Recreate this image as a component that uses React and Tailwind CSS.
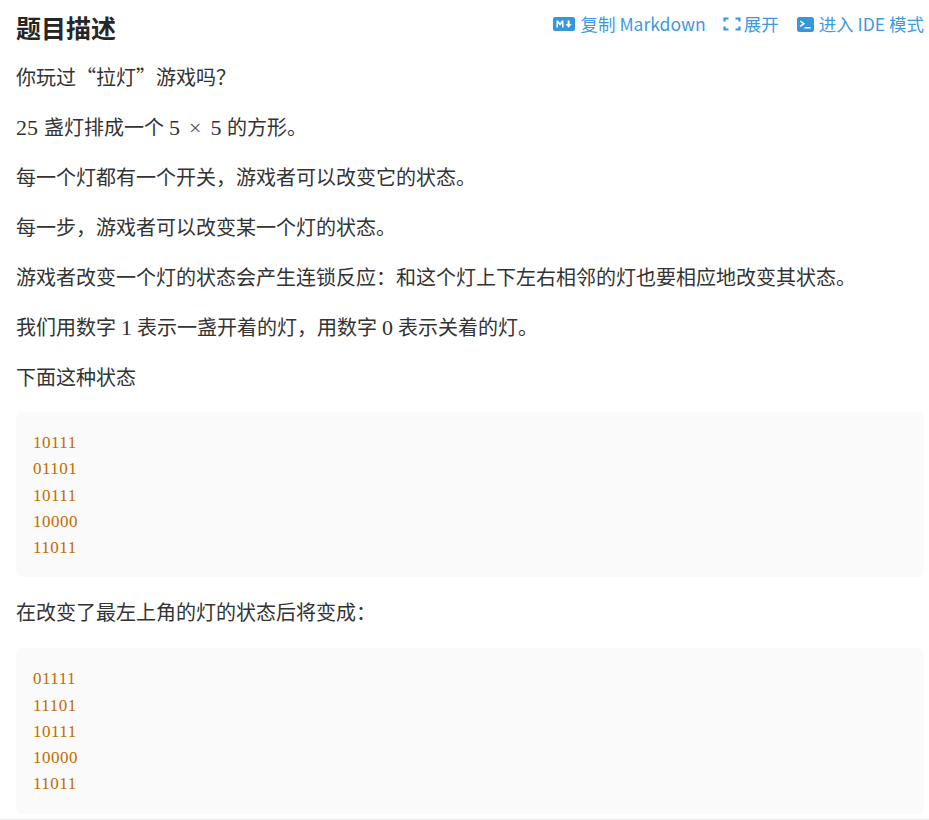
const cjk = "font-['Noto_Sans_CJK_SC','Noto_Sans',sans-serif]";
const serif = "font-['Liberation_Serif',serif] text-[22px]";

function Num({ children }) {
  return <span className={`${serif} mx-[5px]`}>{children}</span>;
}

function Para({ children }) {
  return <p className="h-[30px] mb-5 leading-[28px] whitespace-nowrap">{children}</p>;
}

function CodeBlock({ lines }) {
  return (
    <pre className="bg-[#fafafa] rounded-md px-[17px] pt-[18px] pb-[16px] mb-[21px] font-['Liberation_Serif',serif] text-[17px] tracking-[0.5px] leading-[26.25px] text-[#c26c00]">
      {lines.map((line, i) => (
        <div key={i}>{line}</div>
      ))}
    </pre>
  );
}

export default function App() {
  return (
    <div className={`${cjk} w-[929px] h-[820px] overflow-hidden bg-white pl-4 pr-[5px] text-[#333] text-[20px] border-b-2 border-[#f5f5f5]`}>
      <div className="flex items-center justify-between h-[50px] mb-[13px] pt-[6px]">
        <h1 className="text-[25px] font-bold text-[#262626]">题目描述</h1>
        <div className="flex items-center text-[#3c9ae0] text-[17.5px] mb-[8px]">
          <span className="flex items-center mr-[17px]">
            <svg width="22" height="14" viewBox="0 0 22 14" className="mr-[5px]">
              <rect width="22" height="14" rx="2" fill="#3498db" />
              <path d="M3.5 10.5V3.5h1.6l1.9 2.6 1.9-2.6h1.6v7H9V6.2L7 8.8 5 6.2v4.3z" fill="#fff" />
              <path d="M14.6 3.5h2v3.4h2.1l-3.1 3.8-3.1-3.8h2.1z" fill="#fff" />
            </svg>
            复制 Markdown
          </span>
          <span className="flex items-center mr-[18px]">
            <svg width="18" height="14" viewBox="0 0 18 14" className="mr-[3px]" fill="none" stroke="#3498db" strokeWidth="2.2">
              <path d="M5.5 1.5H1.5v3M12.5 1.5h4v3M5.5 12.5H1.5v-3M12.5 12.5h4v-3" />
            </svg>
            展开
          </span>
          <span className="flex items-center">
            <svg width="17" height="15" viewBox="0 0 17 15" className="mr-[5px]">
              <rect width="17" height="15" rx="2.5" fill="#3498db" />
              <path d="M3.2 4l3.6 2.7-3.6 2.7" fill="none" stroke="#fff" strokeWidth="1.5" />
              <path d="M7.5 10.8h6" stroke="#fff" strokeWidth="1.5" />
            </svg>
            进入 IDE 模式
          </span>
        </div>
      </div>
      <Para>你玩过“拉灯”游戏吗？</Para>
      <Para>
        <span className={`${serif} mr-[6px]`}>25</span>盏灯排成一个
        <span className={`${serif} ml-[5px] mr-[9px]`}>5</span>
        <span className={`${serif} text-[#555]`}>×</span>
        <span className={`${serif} ml-[9px] mr-[5.6px]`}>5</span>的方形。
      </Para>
      <Para>每一个灯都有一个开关，游戏者可以改变它的状态。</Para>
      <Para>每一步，游戏者可以改变某一个灯的状态。</Para>
      <Para>游戏者改变一个灯的状态会产生连锁反应：和这个灯上下左右相邻的灯也要相应地改变其状态。</Para>
      <Para>
        我们用数字<Num>1</Num>表示一盏开着的灯，用数字<Num>0</Num>表示关着的灯。
      </Para>
      <div className="h-[29px] mb-5 leading-[28px]">下面这种状态</div>
      <CodeBlock lines={["10111", "01101", "10111", "10000", "11011"]} />
      <Para>在改变了最左上角的灯的状态后将变成：</Para>
      <CodeBlock lines={["01111", "11101", "10111", "10000", "11011"]} />
    </div>
  );
}
